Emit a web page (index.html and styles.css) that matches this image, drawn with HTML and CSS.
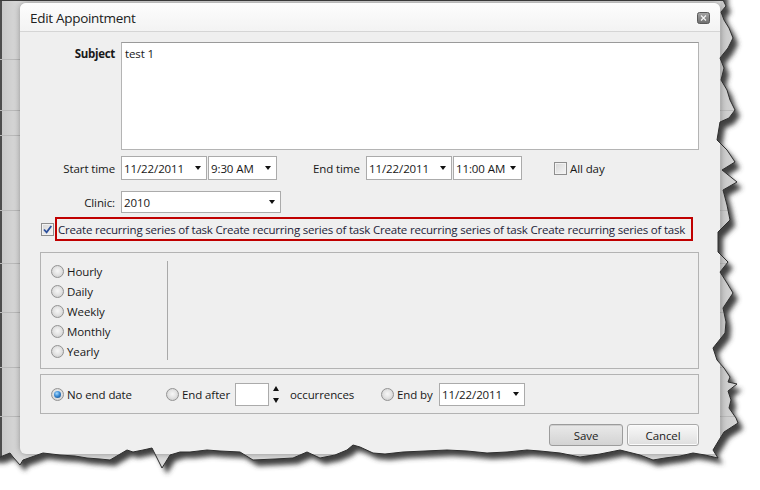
FILE: index.html
```html
<!DOCTYPE html>
<html>
<head>
<meta charset="utf-8">
<title>Edit Appointment</title>
<link rel="stylesheet" href="styles.css">
</head>
<body>
<div class="screen">
  <div class="app">
    <div class="app-row r1"></div>
    <div class="app-row r2"></div>
    <div class="app-row r3"></div>
    <div class="app-row r4"></div>
    <div class="app-row r5"></div>
    <div class="app-row r6"></div>
    <div class="app-row r7"></div>
    <div class="app-row r8"></div>
    <div class="app-row r9"></div>
  </div>

  <div class="dialog">
    <div class="titlebar">
      <span class="title">Edit Appointment</span>
      <span class="close">
        <svg width="13" height="12" viewBox="0 0 13 12">
          <defs>
            <linearGradient id="cg" x1="0" y1="0" x2="0" y2="1">
              <stop offset="0" stop-color="#a6a6a6"/>
              <stop offset="1" stop-color="#6d6d6d"/>
            </linearGradient>
          </defs>
          <rect x="0.5" y="0.5" width="12" height="11" rx="2" fill="url(#cg)" stroke="#595959"/>
          <path d="M4 3.5 L9 8.5 M9 3.5 L4 8.5" stroke="#f4f4f4" stroke-width="1.2" fill="none"/>
        </svg>
      </span>
    </div>

    <div class="body">
      <div class="row subject-row">
        <span class="lbl bold">Subject</span>
        <div class="textarea">test 1</div>
      </div>

      <div class="row time-row">
        <span class="lbl">Start time</span>
        <div class="select w-date">11/22/2011<i class="caret"></i></div>
        <div class="select w-time">9:30 AM<i class="caret"></i></div>
        <span class="lbl-end">End time</span>
        <div class="select w-date">11/22/2011<i class="caret"></i></div>
        <div class="select w-time">11:00 AM<i class="caret"></i></div>
        <span class="check allday"></span>
        <span class="txt">All day</span>
      </div>

      <div class="row clinic-row">
        <span class="lbl">Clinic:</span>
        <div class="select w-clinic">2010<i class="caret"></i></div>
      </div>

      <div class="recur-row">
        <span class="check on">
          <svg width="11" height="11" viewBox="0 0 11 11"><path d="M2 5.5 L4.6 8.3 L9.3 2" stroke="#2b4f9c" stroke-width="1.8" fill="none"/></svg>
        </span>
        <div class="highlight">Create recurring series of task Create recurring series of task Create recurring series of task Create recurring series of task</div>
      </div>

      <div class="box pattern">
        <div class="radios">
          <div class="opt"><span class="radio"></span><span class="txt">Hourly</span></div>
          <div class="opt"><span class="radio"></span><span class="txt">Daily</span></div>
          <div class="opt"><span class="radio"></span><span class="txt">Weekly</span></div>
          <div class="opt"><span class="radio"></span><span class="txt">Monthly</span></div>
          <div class="opt"><span class="radio"></span><span class="txt">Yearly</span></div>
        </div>
        <div class="sep"></div>
      </div>

      <div class="box range">
        <span class="radio on"></span>
        <span class="txt t-noend">No end date</span>
        <span class="radio"></span>
        <span class="txt t-after">End after</span>
        <span class="num"></span>
        <span class="spin"><i class="up"></i><i class="down"></i></span>
        <span class="txt t-occ">occurrences</span>
        <span class="radio"></span>
        <span class="txt t-by">End by</span>
        <div class="select w-date tall">11/22/2011<i class="caret"></i></div>
      </div>

      <div class="buttons">
        <span class="btn save">Save</span>
        <span class="btn cancel">Cancel</span>
      </div>
    </div>
  </div>

  <svg class="torn" width="760" height="490" viewBox="0 0 760 490">
    <defs>
      <filter id="blur" x="-5%" y="-5%" width="110%" height="110%">
        <feGaussianBlur stdDeviation="2.6"/>
      </filter>
      <clipPath id="outside">
        <path clip-rule="evenodd" d="M0 0 H760 V490 H0 Z M0,0 L723,0 L726,6 L721,12 L724,20 L729,28 L733,38 L728,48 L720,58 L724,68 L721,80 L727,90 L730,100 L735,110 L729,118 L720,122 L717,140 L727,150 L735,162 L722,170 L737,182 L723,190 L727,205 L730,220 L718,232 L718,252 L728,262 L720,272 L727,283 L733,293 L723,308 L726,322 L725,333 L713,348 L717,360 L724,368 L730,377 L728,382 L737,384 L728,391 L731,400 L729,408 L736,418 L738,423 L724,432 L719,440 L713,450 L718,458 L705,455 L693,453 L680,456 L665,458 L653,460 L640,455 L620,450 L600,454 L580,457 L560,453 L540,451 L527,450 L507,452 L487,453 L467,451 L447,450 L425,451 L403,452 L385,454 L373,453 L360,447 L353,445 L347,450 L335,455 L320,458 L307,452 L293,458 L275,459 L253,460 L240,452 L220,451 L207,450 L190,452 L180,452 L170,455 L162,468 L152,448 L143,450 L133,452 L127,450 L110,460 L100,459 L87,458 L75,456 L60,455 L43,453 L23,460 L20,465 L13,457 L10,453 L0,457 Z"/>
      </clipPath>
    </defs>
    <path fill="#ffffff" fill-rule="evenodd" d="M0 0 H760 V490 H0 Z M0,0 L723,0 L726,6 L721,12 L724,20 L729,28 L733,38 L728,48 L720,58 L724,68 L721,80 L727,90 L730,100 L735,110 L729,118 L720,122 L717,140 L727,150 L735,162 L722,170 L737,182 L723,190 L727,205 L730,220 L718,232 L718,252 L728,262 L720,272 L727,283 L733,293 L723,308 L726,322 L725,333 L713,348 L717,360 L724,368 L730,377 L728,382 L737,384 L728,391 L731,400 L729,408 L736,418 L738,423 L724,432 L719,440 L713,450 L718,458 L705,455 L693,453 L680,456 L665,458 L653,460 L640,455 L620,450 L600,454 L580,457 L560,453 L540,451 L527,450 L507,452 L487,453 L467,451 L447,450 L425,451 L403,452 L385,454 L373,453 L360,447 L353,445 L347,450 L335,455 L320,458 L307,452 L293,458 L275,459 L253,460 L240,452 L220,451 L207,450 L190,452 L180,452 L170,455 L162,468 L152,448 L143,450 L133,452 L127,450 L110,460 L100,459 L87,458 L75,456 L60,455 L43,453 L23,460 L20,465 L13,457 L10,453 L0,457 Z"/>
    <g clip-path="url(#outside)">
      <path transform="translate(5,6)" fill="#404040" filter="url(#blur)" d="M-10,-10 L723,-10 L723,0 L726,6 L721,12 L724,20 L729,28 L733,38 L728,48 L720,58 L724,68 L721,80 L727,90 L730,100 L735,110 L729,118 L720,122 L717,140 L727,150 L735,162 L722,170 L737,182 L723,190 L727,205 L730,220 L718,232 L718,252 L728,262 L720,272 L727,283 L733,293 L723,308 L726,322 L725,333 L713,348 L717,360 L724,368 L730,377 L728,382 L737,384 L728,391 L731,400 L729,408 L736,418 L738,423 L724,432 L719,440 L713,450 L718,458 L705,455 L693,453 L680,456 L665,458 L653,460 L640,455 L620,450 L600,454 L580,457 L560,453 L540,451 L527,450 L507,452 L487,453 L467,451 L447,450 L425,451 L403,452 L385,454 L373,453 L360,447 L353,445 L347,450 L335,455 L320,458 L307,452 L293,458 L275,459 L253,460 L240,452 L220,451 L207,450 L190,452 L180,452 L170,455 L162,468 L152,448 L143,450 L133,452 L127,450 L110,460 L100,459 L87,458 L75,456 L60,455 L43,453 L23,460 L20,465 L13,457 L10,453 L0,457 L-10,457 Z"/>
    </g>
    <path fill="none" stroke="#2e2e2e" stroke-width="1" d="M723,0 L726,6 L721,12 L724,20 L729,28 L733,38 L728,48 L720,58 L724,68 L721,80 L727,90 L730,100 L735,110 L729,118 L720,122 L717,140 L727,150 L735,162 L722,170 L737,182 L723,190 L727,205 L730,220 L718,232 L718,252 L728,262 L720,272 L727,283 L733,293 L723,308 L726,322 L725,333 L713,348 L717,360 L724,368 L730,377 L728,382 L737,384 L728,391 L731,400 L729,408 L736,418 L738,423 L724,432 L719,440 L713,450 L718,458 L705,455 L693,453 L680,456 L665,458 L653,460 L640,455 L620,450 L600,454 L580,457 L560,453 L540,451 L527,450 L507,452 L487,453 L467,451 L447,450 L425,451 L403,452 L385,454 L373,453 L360,447 L353,445 L347,450 L335,455 L320,458 L307,452 L293,458 L275,459 L253,460 L240,452 L220,451 L207,450 L190,452 L180,452 L170,455 L162,468 L152,448 L143,450 L133,452 L127,450 L110,460 L100,459 L87,458 L75,456 L60,455 L43,453 L23,460 L20,465 L13,457 L10,453 L0,457"/>
  </svg>
</div>
</body>
</html>
```

FILE: styles.css
```css
html, body {
  margin: 0;
  padding: 0;
  background: #ffffff;
}

.screen {
  position: relative;
  width: 760px;
  height: 490px;
  overflow: hidden;
  font-family: "Open Sans", "Noto Sans", "Liberation Sans", sans-serif;
  font-size: 11.5px;
  letter-spacing: -0.1px;
  color: #181818;
}

/* background application behind the dialog */
.app {
  display: flex;
  flex-direction: column;
  width: 760px;
  height: 490px;
  background: #d4d4d4;
  border-top: 1px solid #3c3c3c;
  box-sizing: border-box;
}
.app-row {
  border-bottom: 1px solid #b9b9b9;
  background: linear-gradient(to right, #4d4d4d 0, #4d4d4d 2px, #c9c9c9 2px, #dadada 20px, #dadada 720px, #c8c8c8 721px, #d9d9d9 740px);
}
.r1 { height: 58px; }
.r2 { height: 50px; }
.r3 { height: 24px; }
.r4 { height: 74px; }
.r5 { height: 52px; }
.r6 { height: 48px; }
.r7 { height: 54px; }
.r8 { height: 48px; }
.r9 { flex: 1; }

/* dialog window */
.dialog {
  position: absolute;
  left: 20px;
  top: 3px;
  width: 700px;
  height: 451px;
  background: #efefef;
  border-radius: 6px;
  box-shadow: 0 0 6px rgba(0, 0, 0, 0.35);
}

.titlebar {
  position: relative;
  height: 28px;
  border-bottom: 1px solid #d5d5d5;
  border-radius: 6px 6px 0 0;
  background: linear-gradient(#fdfdfd, #f3f3f3);
  display: flex;
  align-items: center;
  padding-left: 10px;
}
.title {
  font-size: 13.5px;
  letter-spacing: -0.3px;
  color: #202020;
  margin-top: 1px;
}
.close {
  position: absolute;
  right: 10px;
  top: 9px;
  width: 13px;
  height: 12px;
  display: block;
}
.close svg { display: block; }

.body {
  padding: 10px 21px 0 20px;
}

.row {
  display: flex;
  align-items: center;
}

.lbl {
  width: 75px;
  margin-right: 6px;
  text-align: right;
  flex: none;
  white-space: nowrap;
}
.bold { font-weight: 700; letter-spacing: -0.3px; }

.subject-row { align-items: flex-start; }
.subject-row .lbl { padding-top: 4px; }

.textarea {
  width: 578px;
  height: 108px;
  box-sizing: border-box;
  background: #ffffff;
  border: 1px solid #b4b4b4;
  border-top-color: #9a9a9a;
  padding: 3px 3px;
  line-height: 16px;
}

.time-row { margin-top: 6px; height: 24px; }
.clinic-row { margin-top: 11px; height: 22px; }

.select {
  position: relative;
  height: 24px;
  box-sizing: border-box;
  background: #ffffff;
  border: 1px solid #ababab;
  padding-left: 2px;
  display: flex;
  align-items: center;
  flex: none;
  white-space: nowrap;
}
.clinic-row .select { height: 22px; }
.select.tall { height: 23px; }
.w-date { width: 86px; }
.w-time { width: 69px; margin-left: 1px; }
.w-clinic { width: 160px; }

.caret {
  position: absolute;
  right: 5px;
  top: 50%;
  margin-top: -2px;
  width: 0;
  height: 0;
  border-left: 3.5px solid transparent;
  border-right: 3.5px solid transparent;
  border-top: 4px solid #111;
}

.lbl-end {
  margin-left: 36px;
  width: 47px;
  margin-right: 6px;
  white-space: nowrap;
  flex: none;
}

.check {
  width: 13px;
  height: 13px;
  box-sizing: border-box;
  border: 1px solid #8e8e8e;
  background: linear-gradient(135deg, #d6d6d6, #f6f6f6);
  box-shadow: inset 0 0 0 1px #f2f2f2;
  flex: none;
  display: flex;
  align-items: center;
  justify-content: center;
}
.check svg { display: block; }
.allday { margin-left: 32px; margin-right: 3px; }

.recur-row {
  display: flex;
  align-items: center;
  margin-top: 4px;
  height: 24px;
}
.recur-row .check { margin-left: 1px; }
.highlight {
  margin-left: 1px;
  width: 638px;
  height: 24px;
  box-sizing: border-box;
  border: 2px solid #c00000;
  padding-left: 1px;
  display: flex;
  align-items: center;
  white-space: nowrap;
  overflow: hidden;
  letter-spacing: -0.2px;
  color: #1e1e3a;
}

.box {
  border: 1px solid #b3b3b3;
  box-sizing: border-box;
}
.pattern {
  margin-top: 11px;
  height: 117px;
  display: flex;
}
.radios {
  width: 126px;
  padding: 8px 0 0 10px;
  box-sizing: border-box;
  display: flex;
  flex-direction: column;
}
.opt {
  height: 20px;
  display: flex;
  align-items: center;
}
.opt .radio { margin-right: 3px; }
.sep {
  width: 1px;
  height: 99px;
  margin-top: 8px;
  background: #a9a9a9;
}

.radio {
  position: relative;
  width: 13px;
  height: 13px;
  box-sizing: border-box;
  border-radius: 50%;
  border: 1px solid #939393;
  background: radial-gradient(circle at 50% 45%, #f7f7f7 0%, #e4e4e4 45%, #c6c6c6 100%);
  flex: none;
}
.radio.on::after {
  content: "";
  position: absolute;
  left: 2px;
  top: 2px;
  width: 7px;
  height: 7px;
  border-radius: 50%;
  background: radial-gradient(circle at 40% 35%, #a8dcff 0%, #3b8ad3 45%, #0c3f78 100%);
}

.range {
  margin-top: 5px;
  height: 40px;
  display: flex;
  align-items: center;
  padding-left: 10px;
}
.range .radio { margin-right: 3px; }
.txt { white-space: nowrap; flex: none; }
.t-noend { width: 65px; margin-right: 34px; }
.t-after { width: 47px; margin-right: 6px; }
.num {
  width: 34px;
  height: 23px;
  box-sizing: border-box;
  background: #fff;
  border: 1px solid #ababab;
  flex: none;
}
.spin {
  width: 7px;
  height: 17px;
  margin-left: 4px;
  display: flex;
  flex-direction: column;
  justify-content: space-between;
  flex: none;
}
.spin i {
  display: block;
  width: 0;
  height: 0;
  border-left: 3.5px solid transparent;
  border-right: 3.5px solid transparent;
}
.spin .up { border-bottom: 5px solid #111; }
.spin .down { border-top: 5px solid #111; }
.t-occ { margin-left: 10px; width: 63px; margin-right: 28px; }
.t-by { width: 36px; margin-right: 6px; }

.buttons {
  margin-top: 10px;
  display: flex;
  justify-content: flex-end;
  gap: 4px;
}
.btn {
  height: 22px;
  box-sizing: border-box;
  border-radius: 3px;
  display: flex;
  align-items: center;
  justify-content: center;
  color: #222;
}
.save {
  width: 74px;
  border: 1px solid #9c9c9c;
  background: linear-gradient(#e9e9e9, #d3d3d3);
  box-shadow: inset 0 1px 0 #cfcfcf;
}
.cancel {
  width: 72px;
  border: 1px solid #a9a9a9;
  background: linear-gradient(#f8f8f8 0%, #ececec 50%, #dedede 100%);
  box-shadow: inset 0 0 0 1px #fbfbfb;
}

.torn {
  position: absolute;
  left: 0;
  top: 0;
  pointer-events: none;
}
```
